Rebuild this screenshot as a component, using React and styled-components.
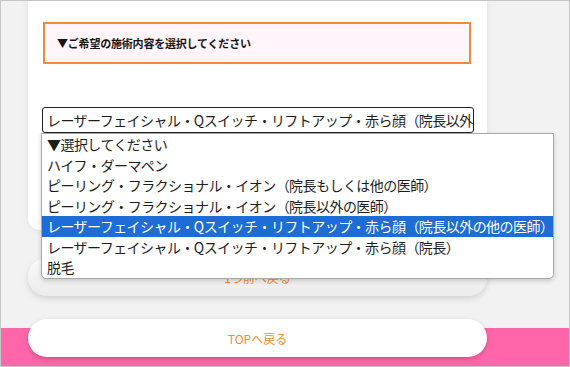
import React from "react";
import styled, { createGlobalStyle } from "styled-components";

const Global = createGlobalStyle`
  html, body { margin: 0; padding: 0; background: #f2f2f2; }
  body { font-family: "Noto Sans CJK JP", "Noto Sans", sans-serif; }
  * { box-sizing: border-box; }
`;

const Frame = styled.div`
  position: relative;
  width: 570px;
  height: 367px;
  border: 1px solid #c6c6c6;
  background: #f2f2f2;
  overflow: hidden;
  display: flex;
  flex-direction: column;
`;

const Card = styled.div`
  margin-left: 27px;
  width: 459px;
  height: 229px;
  background: #fff;
  border-radius: 0 0 12px 12px;
  box-shadow: 0 0 9px rgba(0, 0, 0, 0.07);
  padding: 21px 15px 0 14px;
  display: flex;
  flex-direction: column;
`;

const Heading = styled.div`
  height: 42px;
  margin: 0 1px 0 1px;
  border: 2px solid #ef8c3a;
  background: #fff5fa;
  display: flex;
  align-items: center;
  padding-left: 12px;
  font-size: 11px;
  font-weight: 700;
  letter-spacing: -0.2px;
  color: #151515;
`;

const SelectWrap = styled.div`
  position: relative;
  margin-top: 43px;
  margin-right: -2px;
`;

const SelectBox = styled.div`
  height: 26px;
  border: 1.5px solid #222;
  border-radius: 3px;
  background: #fff;
  padding-left: 4px;
  display: flex;
  align-items: center;
  white-space: nowrap;
  overflow: hidden;
  font-size: 14px;
  letter-spacing: -0.55px;
  color: #1d1d1d;
`;

const List = styled.ul`
  position: absolute;
  top: 26px;
  left: -1px;
  width: 513px;
  margin: 0;
  padding: 0;
  list-style: none;
  background: #fff;
  border: 1px solid #a8a8a8;
  border-radius: 0 0 5px 5px;
  box-shadow: 0 2px 5px rgba(0, 0, 0, 0.18);
  z-index: 5;
`;

const Option = styled.li`
  height: 20.5px;
  line-height: 20.5px;
  padding-left: 5px;
  white-space: nowrap;
  font-size: 14px;
  letter-spacing: -0.55px;
  color: ${(p) => (p.$active ? "#fff" : "#1d1d1d")};
  background: ${(p) => (p.$active ? "#1e6cd6" : "transparent")};
`;

const BackButton = styled.div`
  margin: 28px 0 0 27px;
  width: 459px;
  height: 38px;
  border-radius: 19px;
  background: linear-gradient(#fbfbfb, #ebebeb);
  box-shadow: 0 3px 6px rgba(0, 0, 0, 0.13);
  display: flex;
  align-items: center;
  justify-content: center;
  font-size: 12px;
  color: #ef8c3a;
`;

const Footer = styled.div`
  margin-top: 32px;
  flex: 1;
  background: #ff66a9;
  padding-left: 27px;
`;

const TopButton = styled.div`
  margin-top: -9px;
  width: 459px;
  height: 38px;
  border-radius: 19px;
  background: #fff;
  box-shadow: 0 2px 5px rgba(0, 0, 0, 0.2);
  display: flex;
  align-items: center;
  justify-content: center;
  font-size: 12px;
  color: #f0903a;
`;

const options = [
  "▼選択してください",
  "ハイフ・ダーマペン",
  "ピーリング・フラクショナル・イオン（院長もしくは他の医師）",
  "ピーリング・フラクショナル・イオン（院長以外の医師）",
  "レーザーフェイシャル・Qスイッチ・リフトアップ・赤ら顔（院長以外の他の医師）",
  "レーザーフェイシャル・Qスイッチ・リフトアップ・赤ら顔（院長）",
  "脱毛",
];

export default function App() {
  return (
    <>
      <Global />
      <Frame>
        <Card>
          <Heading>▼ご希望の施術内容を選択してください</Heading>
          <SelectWrap>
            <SelectBox>{options[4]}</SelectBox>
            <List>
              {options.map((o, i) => (
                <Option key={i} $active={i === 4}>
                  {o}
                </Option>
              ))}
            </List>
          </SelectWrap>
        </Card>
        <BackButton>1つ前へ戻る</BackButton>
        <Footer>
          <TopButton>TOPへ戻る</TopButton>
        </Footer>
      </Frame>
    </>
  );
}
